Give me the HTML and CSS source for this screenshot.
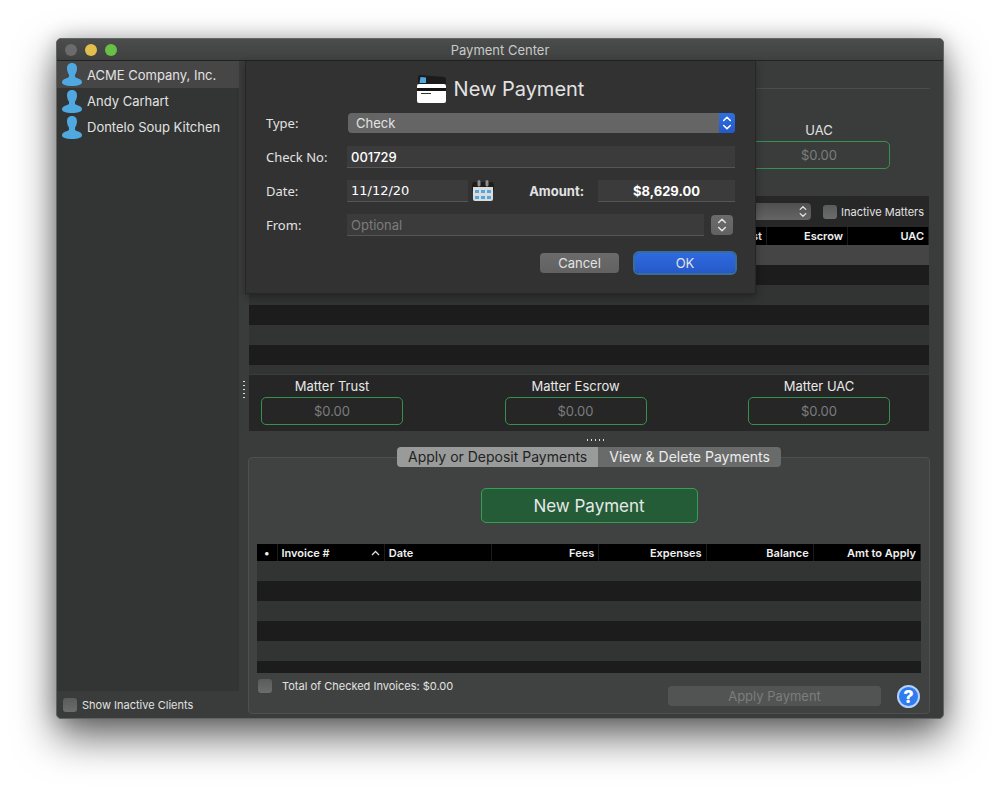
FILE: index.html
```html
<!DOCTYPE html>
<html lang="en">
<head>
    <meta charset="UTF-8">
    <meta name="viewport" content="width=device-width, initial-scale=1.0">
    <title>Payment Center</title>
    <link rel="stylesheet" href="styles.css">
</head>
<body>

<!-- shared icons -->
<svg class="sprite" aria-hidden="true">
    <symbol id="person" viewBox="0 0 20 23">
        <path fill="#4fa8df" d="M10 0C6.800 0 5 2.200 5 5.200C5 8 6 10 7 11.800V13.500C7 14.800 5 15 3 15.800C1 16.600 0 17.800 0 19.300C0 21.800 4.200 23 10 23S20 21.800 20 19.300C20 17.800 19 16.600 17 15.800C15 15 13 14.800 13 13.500V11.800C14 10 15 8 15 5.200C15 2.200 13.200 0 10 0Z"/>
    </symbol>
    <symbol id="updown" viewBox="0 0 16 20">
        <path fill="none" stroke="currentColor" stroke-width="1.600" stroke-linecap="round" stroke-linejoin="round" d="M4.700 7.500L8 4.300L11.300 7.500M4.700 12.500L8 15.700L11.300 12.500"/>
    </symbol>
</svg>

<div class="window">
    <header class="titlebar">
        <div class="lights">
            <button class="light light-close" aria-label="Close"></button>
            <button class="light light-min" aria-label="Minimize"></button>
            <button class="light light-zoom" aria-label="Zoom"></button>
        </div>
        <h1>Payment Center</h1>
    </header>

    <div class="content">
        <aside class="sidebar">
            <ul class="clients">
                <li><a href="#" class="client selected"><svg><use href="#person"/></svg>ACME Company, Inc.</a></li>
                <li><a href="#" class="client"><svg><use href="#person"/></svg>Andy Carhart</a></li>
                <li><a href="#" class="client"><svg><use href="#person"/></svg>Dontelo Soup Kitchen</a></li>
            </ul>
            <label class="check sidebar-footer"><input type="checkbox">Show Inactive Clients</label>
        </aside>

        <div class="splitter-v">
            <svg width="2" height="20"><path d="M1 1V20" stroke="#ddd" stroke-width="2" stroke-dasharray="1 3"/></svg>
        </div>

        <main class="main">
            <section class="client-totals">
                <div class="total">
                    <label for="uac">UAC</label>
                    <input id="uac" type="text" value="$0.00" readonly>
                </div>
            </section>

            <section class="matters">
                <div class="toolbar">
                    <span class="popup popup-matter">
                        <select aria-label="Matter"><option></option></select>
                        <svg><use href="#updown"/></svg>
                    </span>
                    <label class="check"><input type="checkbox">Inactive Matters</label>
                </div>
                <div class="matter-list">
                    <table>
                        <thead>
                            <tr><th></th><th class="num col-matter">Trust</th><th class="num col-matter">Escrow</th><th class="num col-matter">UAC</th></tr>
                        </thead>
                        <tbody>
                            <tr class="selected"><td colspan="4"></td></tr>
                            <tr><td colspan="4"></td></tr>
                            <tr><td colspan="4"></td></tr>
                            <tr><td colspan="4"></td></tr>
                            <tr><td colspan="4"></td></tr>
                            <tr><td colspan="4"></td></tr>
                            <tr><td colspan="4"></td></tr>
                        </tbody>
                    </table>
                </div>
                <div class="matter-totals">
                    <div class="total">
                        <label for="mtrust">Matter Trust</label>
                        <input id="mtrust" type="text" value="$0.00" readonly>
                    </div>
                    <div class="total">
                        <label for="mescrow">Matter Escrow</label>
                        <input id="mescrow" type="text" value="$0.00" readonly>
                    </div>
                    <div class="total">
                        <label for="muac">Matter UAC</label>
                        <input id="muac" type="text" value="$0.00" readonly>
                    </div>
                </div>
            </section>

            <div class="splitter-h">
                <svg width="18" height="2"><path d="M0 1H18" stroke="#ddd" stroke-width="2" stroke-dasharray="1 3"/></svg>
            </div>

            <section class="panel">
                <div class="tabs" role="tablist">
                    <button class="tab active" role="tab" aria-selected="true">Apply or Deposit Payments</button>
                    <button class="tab" role="tab" aria-selected="false">View &amp; Delete Payments</button>
                </div>
                <button class="new-payment">New Payment</button>
                <div class="invoice-list">
                    <table>
                        <thead>
                            <tr>
                                <th class="col-dot">•</th>
                                <th><span class="sorted">Invoice #<svg width="9" height="6"><path d="M1 5L4.500 1.500L8 5" fill="none" stroke="#ddd" stroke-width="1.300"/></svg></span></th>
                                <th>Date</th>
                                <th class="num">Fees</th>
                                <th class="num">Expenses</th>
                                <th class="num">Balance</th>
                                <th class="num">Amt to Apply</th>
                            </tr>
                        </thead>
                        <tbody>
                            <tr><td colspan="7"></td></tr>
                            <tr><td colspan="7"></td></tr>
                            <tr><td colspan="7"></td></tr>
                            <tr><td colspan="7"></td></tr>
                            <tr><td colspan="7"></td></tr>
                            <tr><td colspan="7"></td></tr>
                        </tbody>
                    </table>
                </div>
                <footer class="panel-footer">
                    <label class="check check-all"><input type="checkbox">Total of Checked Invoices: $0.00</label>
                    <button class="btn apply" disabled>Apply Payment</button>
                    <button class="help" aria-label="Help">?</button>
                </footer>
            </section>
        </main>

        <!-- sheet hanging from the titlebar -->
        <form class="sheet">
            <h2>
                <svg width="29" height="29" viewBox="0 0 29 29">
                    <path fill="#1b1b1b" d="M3 0L27 2Q29 2.200 29 4V10H1V2Q1 0 3 0Z"/>
                    <path fill="#4fa8df" d="M3.500 2L9 2.500V8H2.500Z"/>
                    <rect x="0" y="9" width="29" height="19" rx="2" fill="#fff"/>
                    <rect x="0" y="13" width="29" height="3" fill="#151515"/>
                    <rect x="4" y="18" width="10" height="1" fill="#333"/>
                </svg>
                New Payment
            </h2>
            <div class="fields">
                <label for="type">Type:</label>
                <span class="popup popup-type">
                    <select id="type"><option>Check</option></select>
                    <svg><use href="#updown"/></svg>
                </span>

                <label for="checkno">Check No:</label>
                <input id="checkno" class="field" type="text" value="001729">

                <label for="date">Date:</label>
                <div class="field-row">
                    <input id="date" class="field date" type="text" value="11/12/20">
                    <button type="button" class="calendar" aria-label="Pick a date">
                        <svg width="22" height="22" viewBox="0 0 22 22">
                            <rect x="0" y="2" width="22" height="10" rx="3" fill="#1d1d1d"/>
                            <path d="M1 7H21V19Q21 21 19 21H3Q1 21 1 19Z" fill="#dcdcdc"/>
                            <path d="M7 1.500V5M15 1.500V5" stroke="#8c8c8c" stroke-width="3" stroke-linecap="round"/>
                            <path d="M3 11.500H7M9 11.500H13M15 11.500H19M3 17.500H7M9 17.500H13M15 17.500H19" stroke="#4fa8df" stroke-width="3"/>
                        </svg>
                    </button>
                    <label for="amount" class="amount-label">Amount:</label>
                    <input id="amount" class="field amount" type="text" value="$8,629.00">
                </div>

                <label for="from">From:</label>
                <div class="field-row from-row">
                    <input id="from" class="field" type="text" placeholder="Optional">
                    <button type="button" class="btn stepper" aria-label="Choose payer"><svg><use href="#updown"/></svg></button>
                </div>
            </div>
            <div class="actions">
                <button type="button" class="btn cancel">Cancel</button>
                <button type="button" class="btn ok">OK</button>
            </div>
        </form>
    </div>
</div>

</body>
</html>
```
FILE: styles.css
```css
* {
    box-sizing: border-box;
}

body {
    margin: 0;
    padding: 38px 56px 75px;
    min-height: 100vh;
    display: flex;
    background-color: #fff;
    color: #e2e2e2;
    font-family: Inter, "Liberation Sans", sans-serif;
    font-size: 13px;
    line-height: 16px;
}

button, input, select {
    font: inherit;
    color: inherit;
    margin: 0;
    padding: 0;
    border: none;
}

.sprite {
    display: none;
}

.window {
    flex: 1;
    display: flex;
    flex-direction: column;
    border: 1px solid #626564;
    border-radius: 5px;
    background-color: #3a3c3b;
    box-shadow: 0 18px 40px rgba(0, 0, 0, 0.6), 0 0 20px rgba(0, 0, 0, 0.2);
}

/* titlebar */
.titlebar {
    display: grid;
    grid-template-columns: 1fr auto 1fr;
    align-items: center;
    height: 22px;
    padding: 0 8px;
    border-bottom: 1px solid #222;
    border-radius: 4px 4px 0 0;
    background: linear-gradient(#4a4d4b, #3e413f);
}

.titlebar h1 {
    margin: 0;
    font-size: 13px;
    font-weight: 400;
    color: #c9c9c9;
}

.lights {
    display: flex;
    gap: 8px;
}

.light {
    width: 12px;
    height: 12px;
    border-radius: 50%;
}

.light-close { background-color: #6a6b6a; }
.light-min { background-color: #e2be4c; }
.light-zoom { background-color: #68c044; }

.content {
    position: relative;
    flex: 1;
    display: flex;
}

/* sidebar */
.sidebar {
    width: 182px;
    display: flex;
    flex-direction: column;
}

.clients {
    flex: 1;
    margin: 0;
    padding: 0;
    list-style: none;
    background-color: #323534;
}

.client {
    display: flex;
    align-items: center;
    gap: 5px;
    height: 26px;
    padding-left: 5px;
    color: #e2e2e2;
    text-decoration: none;
}

.client svg {
    width: 20px;
    height: 23px;
}

.client.selected {
    height: 27px;
    background-color: #464646;
}

.sidebar-footer {
    height: 27px;
    padding-left: 6px;
}

.check {
    display: flex;
    align-items: center;
    gap: 4px;
    font-size: 11px;
    white-space: nowrap;
}

.check input {
    appearance: none;
    width: 14px;
    height: 14px;
    border-radius: 3px;
    background: linear-gradient(#5a5c5b, #6b6d6c);
}

.sidebar-footer input {
    margin-right: 1px;
}

.splitter-v {
    width: 9px;
    display: flex;
    align-items: center;
    justify-content: center;
}

/* main column */
.main {
    flex: 1;
    min-width: 0;
    display: flex;
    flex-direction: column;
    padding-bottom: 4px;
}

.client-totals {
    height: 108px;
    margin: 27px 13px 0 0;
    padding: 33px 40px 0 0;
    border-top: 1px solid #4b4d4c;
    display: flex;
    justify-content: flex-end;
}

.total {
    width: 142px;
    display: flex;
    flex-direction: column;
    gap: 3px;
    text-align: center;
}

.total input {
    width: 100%;
    height: 28px;
    border: 1px solid #35914f;
    border-radius: 5px;
    background: none;
    color: #7c7c7c;
    text-align: center;
}

.matters {
    margin: 0 14px 0 1px;
}

.toolbar {
    display: flex;
    justify-content: flex-end;
    align-items: center;
    gap: 12px;
    height: 31px;
    padding-right: 5px;
    background-color: #272727;
}

/* select with its arrows stacked in one grid cell */
.popup {
    display: grid;
    border-radius: 4px;
    background-color: #656565;
    overflow: hidden;
}

.popup select, .popup svg {
    grid-area: 1 / 1;
}

.popup select {
    appearance: none;
    padding: 0 8px;
    background: none;
}

.popup svg {
    justify-self: end;
    width: 16px;
    height: 100%;
    pointer-events: none;
}

.popup-matter {
    width: 200px;
    height: 17px;
    background: linear-gradient(#505050, #646464);
}

table {
    width: 100%;
    border-collapse: collapse;
    table-layout: fixed;
}

thead tr {
    background-color: #000;
}

th {
    height: 17px;
    padding: 0 4px;
    border-right: 1px solid #1c1c1c;
    font-size: 11px;
    font-weight: 600;
    line-height: 14px;
    text-align: left;
    color: #f0f0f0;
}

th.num {
    text-align: right;
}

td {
    height: 20px;
    padding: 0;
}

tbody tr { background-color: #313433; }
tbody tr:nth-child(even) { background-color: #1c1c1c; }
tbody tr.selected { background-color: #454545; }

.matter-list {
    height: 147px;
    overflow: hidden;
}

.matter-list th {
    height: 18px;
}

.col-matter {
    width: 81px;
}

.matter-totals {
    display: flex;
    justify-content: space-between;
    height: 57px;
    padding: 3px 39px 0 12px;
    background-color: #262626;
    color: #e8e8e8;
    border-top: 1px solid #3a3c3b;
}

.splitter-h {
    height: 26px;
    display: flex;
    justify-content: center;
    padding-top: 8px;
}

/* payments panel */
.panel {
    flex: 1;
    display: flex;
    flex-direction: column;
    align-items: center;
    margin-right: 13px;
    padding: 0 8px;
    border: 1px solid #4d504f;
    border-radius: 4px;
    background-color: #404241;
}

.tabs {
    display: flex;
    margin-top: -11px;
    border-radius: 4px;
    overflow: hidden;
}

.tab {
    height: 20px;
    padding: 0 11px;
    background-color: #696b6a;
    font-size: 14px;
    color: #ececec;
}

.tab.active {
    background-color: #999b9a;
    color: #222;
}

.new-payment {
    width: 217px;
    height: 35px;
    margin: 21px 0;
    border: 1px solid #35a052;
    border-radius: 5px;
    background-color: #235c36;
    font-size: 17px;
    color: #e8e8e8;
}

.invoice-list {
    width: 100%;
    height: 129px;
    overflow: hidden;
}

.invoice-list .col-dot {
    width: 20px;
    text-align: center;
    padding: 0;
}

.sorted {
    display: flex;
    justify-content: space-between;
    align-items: center;
}

.panel-footer {
    width: 100%;
    display: flex;
    align-items: flex-start;
    padding: 5px 1px 0;
}

.check-all {
    flex: 1;
    gap: 10px;
}

.btn {
    height: 20px;
    border-radius: 4px;
    background: linear-gradient(#6b6b6b, #616161);
}

.apply {
    width: 213px;
    margin: 8px 16px 0 0;
    background: #525453;
    color: #7b7d7c;
}

.help {
    width: 23px;
    height: 23px;
    margin-top: 7px;
    border: 2px solid #b4d3fa;
    border-radius: 50%;
    background-color: #2f7bf0;
    color: #fff;
    font-size: 18px;
    font-weight: 800;
    line-height: 18px;
}

/* new payment sheet */
.sheet {
    position: absolute;
    top: 0;
    left: 50%;
    width: 511px;
    height: 233px;
    margin-left: -255px;
    padding: 13px 20px 0;
    border: 1px solid #252625;
    border-top: none;
    background-color: #323232;
    box-shadow: 0 3px 8px rgba(0, 0, 0, 0.3);
}

.sheet h2 {
    display: flex;
    justify-content: center;
    align-items: center;
    gap: 8px;
    height: 30px;
    margin: 0 0 8px;
    font-size: 20px;
    font-weight: 400;
}

.fields {
    display: grid;
    grid-template-columns: 81px 1fr;
    grid-auto-rows: 22px;
    row-gap: 12px;
    align-items: center;
}

.fields label {
    font-family: "Noto Sans", "Open Sans", sans-serif;
    font-size: 13px;
}

.popup-type {
    height: 20px;
    margin-left: 1px;
}

.popup-type svg {
    background: linear-gradient(#2f6fe0, #2459c9);
    color: #fff;
}

.field {
    width: 100%;
    height: 22px;
    padding: 0 4px;
    border-bottom: 1px solid #555;
    background-color: #3b3b3b;
    color: #fff;
    font-weight: 500;
}

.field::placeholder {
    color: #7c7c7c;
    font-weight: 400;
}

.field-row {
    display: flex;
    align-items: center;
}

.field.date {
    width: 121px;
    font-family: "DejaVu Sans", sans-serif;
}

.calendar {
    width: 22px;
    height: 22px;
    margin-left: 4px;
    background: none;
}

.calendar svg {
    display: block;
}

.fields .amount-label {
    flex: 1;
    padding-right: 14px;
    font-family: Inter, sans-serif;
    font-weight: 700;
    text-align: right;
}

.field.amount {
    width: 137px;
    font-weight: 700;
    text-align: center;
}

.from-row {
    gap: 7px;
    padding-right: 2px;
}

.stepper {
    width: 22px;
    flex-shrink: 0;
}

.stepper svg {
    display: block;
    width: 16px;
    height: 20px;
    margin: 0 auto;
}

.actions {
    display: flex;
    justify-content: flex-end;
    gap: 16px;
    margin-top: 17px;
}

.cancel {
    width: 79px;
}

.ok {
    width: 100px;
    background: linear-gradient(#2f6ae0, #2659c8);
    box-shadow: 0 0 0 2px #386c9c;
}
```
